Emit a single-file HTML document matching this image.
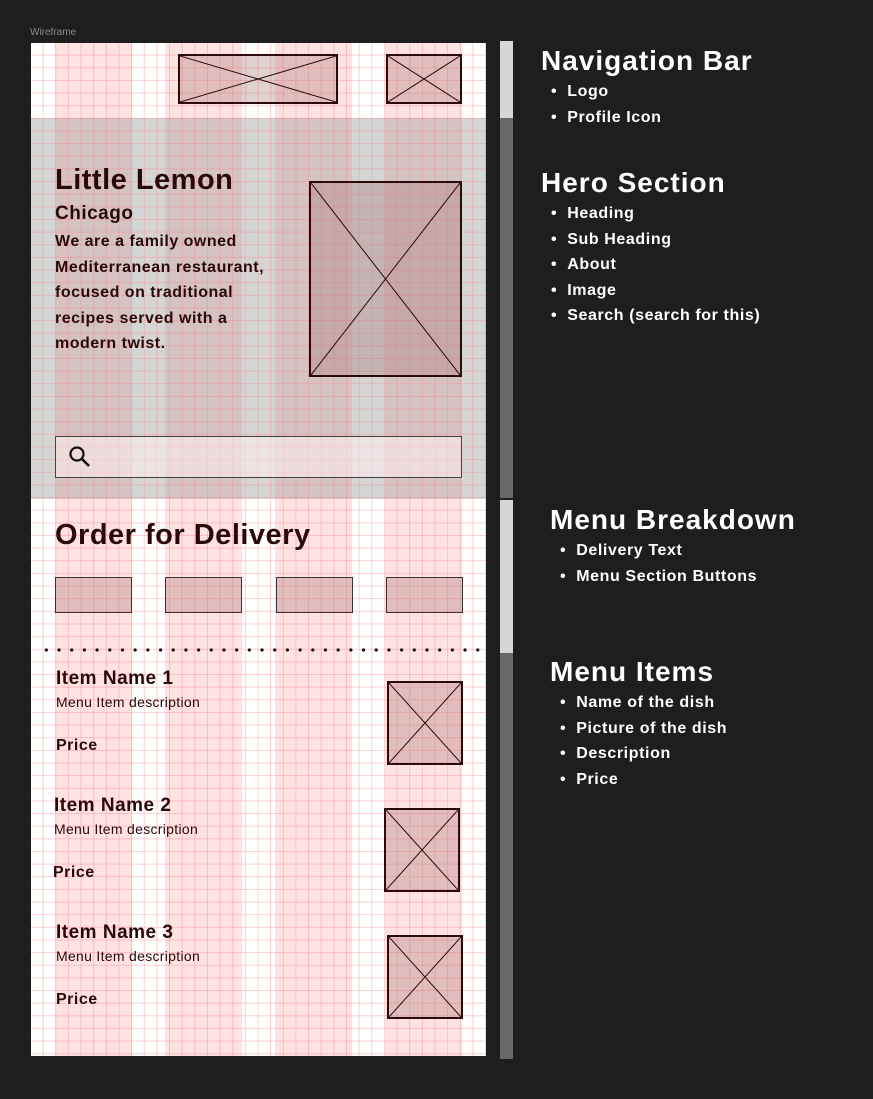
<!DOCTYPE html>
<html><head><style>
*{margin:0;padding:0;box-sizing:border-box}
body{width:873px;height:1099px;background:#1e1e1e;position:relative;overflow:hidden;font-family:"Liberation Sans",sans-serif}
.a{position:absolute}
#frame{left:31px;top:43px;width:455px;height:1013px;background:#fff;overflow:hidden}
.col{position:absolute;top:0;height:1013px;width:77px;background:rgba(255,150,150,0.28)}
.grid{position:absolute;left:0;top:0;width:455px;height:1013px;
background-image:linear-gradient(to right,rgba(255,120,120,0.35) 1px,transparent 1px),linear-gradient(to bottom,rgba(255,120,120,0.35) 1px,transparent 1px);
background-size:12.65px 12.65px;background-position:-1px -1px}
.hero{position:absolute;left:0;top:75px;width:455px;height:381px;background:rgba(150,150,150,0.4)}
.ph{position:absolute;border:2px solid #2a0a0a;background:rgba(170,120,120,0.35)}
.ph svg{position:absolute;left:0;top:0;width:100%;height:100%}
.t{position:absolute;color:#2a0808;font-weight:bold;white-space:nowrap;letter-spacing:0.5px}
.btn{position:absolute;top:577px;width:77px;height:36px;border:1.5px solid #333;background:rgba(170,120,120,0.35)}
.r{color:#fff;position:absolute;white-space:nowrap}
.r h2{font-size:28px;font-weight:bold;margin-bottom:2px;letter-spacing:1px}
.r li{list-style:none;font-size:16px;font-weight:bold;line-height:25.5px;padding-left:10px;letter-spacing:0.6px}
.r li:before{content:"•";margin-right:10px}
</style></head><body>
<div class="a" style="left:30px;top:27px;font-size:10px;color:#8a8a8a">Wireframe</div>
<div class="a" id="frame">
 <div class="col" style="left:24px"></div>
 <div class="col" style="left:134px"></div>
 <div class="col" style="left:244px"></div>
 <div class="col" style="left:354px"></div>
 <div class="hero"></div>
 <div class="grid"></div>
</div>
<div class="ph" style="left:178px;top:54px;width:160px;height:50px"><svg viewBox="0 0 100 100" preserveAspectRatio="none"><path d="M0 0L100 100M100 0L0 100" stroke="#2a0a0a" stroke-width="1" vector-effect="non-scaling-stroke"/></svg></div>
<div class="ph" style="left:386px;top:54px;width:76px;height:50px"><svg viewBox="0 0 100 100" preserveAspectRatio="none"><path d="M0 0L100 100M100 0L0 100" stroke="#2a0a0a" stroke-width="1" vector-effect="non-scaling-stroke"/></svg></div>
<div class="t" style="left:55px;top:164px;font-size:29px">Little Lemon</div>
<div class="t" style="left:55px;top:203px;font-size:19px">Chicago</div>
<div class="t" style="left:55px;top:229px;font-size:16px;line-height:25.5px">We are a family owned<br>Mediterranean restaurant,<br>focused on traditional<br>recipes served with a<br>modern twist.</div>
<div class="ph" style="left:309px;top:181px;width:153px;height:196px"><svg viewBox="0 0 100 100" preserveAspectRatio="none"><path d="M0 0L100 100M100 0L0 100" stroke="#2a0a0a" stroke-width="1" vector-effect="non-scaling-stroke"/></svg></div>
<div class="a" style="left:55px;top:436px;width:407px;height:42px;border:1.5px solid #444;background:rgba(255,240,240,0.55)"></div>
<svg class="a" style="left:68px;top:445px" width="24" height="24" viewBox="0 0 24 24"><circle cx="9" cy="9" r="6.5" fill="none" stroke="#111" stroke-width="2.2"/><path d="M14 14L21 21" stroke="#111" stroke-width="2.6"/></svg>
<div class="t" style="left:55px;top:519px;font-size:29px">Order for Delivery</div>
<div class="btn" style="left:55px"></div><div class="btn" style="left:165px"></div><div class="btn" style="left:276px"></div><div class="btn" style="left:386px"></div>
<div class="a" style="left:40px;top:648px;width:440px;height:4px;background-image:radial-gradient(circle,#111 1.6px,transparent 1.8px);background-size:12.7px 4px"></div>
<div class="t" style="left:56px;top:668px;font-size:19px">Item Name 1</div>
<div class="t" style="left:56px;top:694px;font-size:14px;font-weight:normal;letter-spacing:0.3px">Menu Item description</div>
<div class="t" style="left:56px;top:737px;font-size:16px">Price</div>
<div class="ph" style="left:387px;top:681px;width:76px;height:84px"><svg viewBox="0 0 100 100" preserveAspectRatio="none"><path d="M0 0L100 100M100 0L0 100" stroke="#2a0a0a" stroke-width="1" vector-effect="non-scaling-stroke"/></svg></div>
<div class="t" style="left:54px;top:795px;font-size:19px">Item Name 2</div>
<div class="t" style="left:54px;top:821px;font-size:14px;font-weight:normal;letter-spacing:0.3px">Menu Item description</div>
<div class="t" style="left:53px;top:864px;font-size:16px">Price</div>
<div class="ph" style="left:384px;top:808px;width:76px;height:84px"><svg viewBox="0 0 100 100" preserveAspectRatio="none"><path d="M0 0L100 100M100 0L0 100" stroke="#2a0a0a" stroke-width="1" vector-effect="non-scaling-stroke"/></svg></div>
<div class="t" style="left:56px;top:922px;font-size:19px">Item Name 3</div>
<div class="t" style="left:56px;top:948px;font-size:14px;font-weight:normal;letter-spacing:0.3px">Menu Item description</div>
<div class="t" style="left:56px;top:991px;font-size:16px">Price</div>
<div class="ph" style="left:387px;top:935px;width:76px;height:84px"><svg viewBox="0 0 100 100" preserveAspectRatio="none"><path d="M0 0L100 100M100 0L0 100" stroke="#2a0a0a" stroke-width="1" vector-effect="non-scaling-stroke"/></svg></div>
<div class="a" style="left:500px;top:41px;width:13px;height:77px;background:#d6d6d6"></div>
<div class="a" style="left:500px;top:118px;width:13px;height:380px;background:#686868"></div>
<div class="a" style="left:500px;top:500px;width:13px;height:153px;background:#d6d6d6"></div>
<div class="a" style="left:500px;top:653px;width:13px;height:406px;background:#686868"></div>
<div class="r" style="left:541px;top:45px"><h2>Navigation Bar</h2><ul><li>Logo</li><li>Profile Icon</li></ul></div>
<div class="r" style="left:541px;top:167px"><h2>Hero Section</h2><ul><li>Heading</li><li>Sub Heading</li><li>About</li><li>Image</li><li>Search (search for this)</li></ul></div>
<div class="r" style="left:550px;top:504px"><h2>Menu Breakdown</h2><ul><li>Delivery Text</li><li>Menu Section Buttons</li></ul></div>
<div class="r" style="left:550px;top:656px"><h2>Menu Items</h2><ul><li>Name of the dish</li><li>Picture of the dish</li><li>Description</li><li>Price</li></ul></div>
</body></html>
